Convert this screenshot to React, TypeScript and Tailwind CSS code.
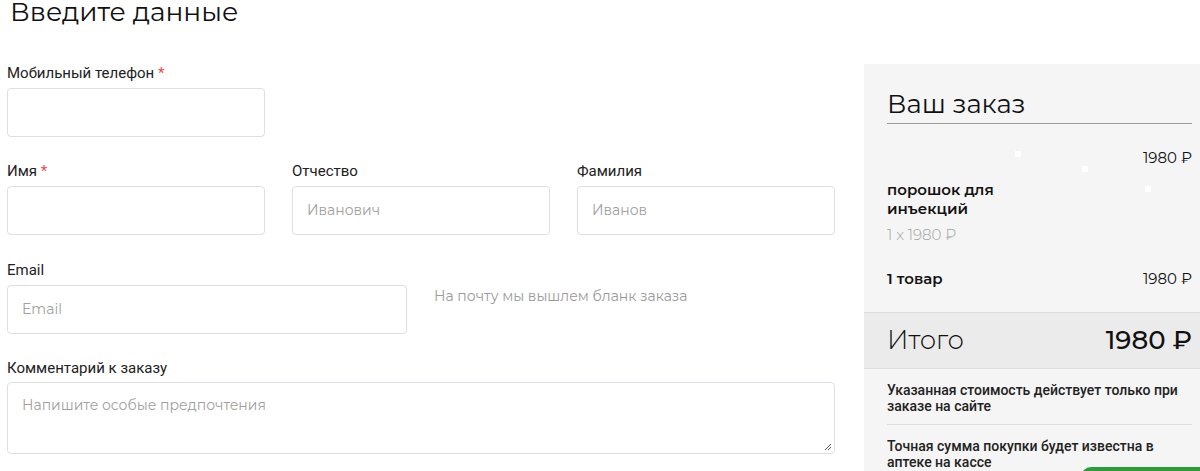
import React from "react";

const mont = "font-['Montserrat','Noto_Sans','DejaVu_Sans',sans-serif]";
const roboto = "font-['Roboto','Liberation_Sans',sans-serif]";

const Field = ({
  label,
  required,
  placeholder,
  className,
}: {
  label: string;
  required?: boolean;
  placeholder?: string;
  className?: string;
}) => (
  <div className={className}>
    <div className={`${roboto} text-[15px] leading-[18px] text-[#222]`}>
      {label}
      {required && <span className="text-[#e94b4b]"> *</span>}
    </div>
    <div className="mt-[6px] h-[49px] rounded-[4px] border border-[#dcdfe6] bg-white px-[14px] flex items-center">
      <span className={`${mont} text-[14px] text-[#a0a0a0]`}>{placeholder}</span>
    </div>
  </div>
);

const App = () => {
  return (
    <div className="flex w-[1200px] h-[471px] overflow-hidden bg-white text-[#111]">
      {/* form */}
      <div className="ml-[7px] w-[828px] shrink-0">
        <h1 className={`${mont} ml-[3px] -mt-[6px] text-[26.5px] font-normal leading-[36px]`}>
          Введите данные
        </h1>
        <Field label="Мобильный телефон" required className="mt-[34px] w-[258px]" />
        <div className="mt-[25px] grid grid-cols-3 gap-x-[27px]">
          <Field label="Имя" required />
          <Field label="Отчество" placeholder="Иванович" />
          <Field label="Фамилия" placeholder="Иванов" />
        </div>
        <div className="mt-[26px] flex items-end">
          <Field label="Email" placeholder="Email" className="w-[400px]" />
          <div className={`${mont} ml-[27px] mb-[27px] text-[14px] text-[#9a9a9a]`}>
            На почту мы вышлем бланк заказа
          </div>
        </div>
        <div className="mt-[25px]">
          <div className={`${roboto} text-[15px] leading-[18px] text-[#222]`}>Комментарий к заказу</div>
          <div className="relative mt-[5px] h-[72px] rounded-[4px] border border-[#dcdfe6] bg-white px-[14px] pt-[9px]">
            <span className={`${mont} text-[14px] text-[#a0a0a0]`}>Напишите особые предпочтения</span>
            <svg className="absolute right-[2px] bottom-[2px]" width="9" height="9" viewBox="0 0 9 9">
              <path d="M8 2 L2 8 M8 5 L5 8" stroke="#555" strokeWidth="1" />
            </svg>
          </div>
        </div>
      </div>

      {/* order summary */}
      <div className="relative ml-[29px] mt-[64px] w-[336px] shrink-0 bg-[#f5f5f5]">
        <div className="px-[23px] pr-[8px]">
          <div className={`${mont} pt-[25px] text-[26px] leading-[30px] font-normal text-[#111]`}>Ваш заказ</div>
          <div className="mt-[4px] h-px bg-[#9b9b9b]" />
          <div className="relative h-[128px]">
            <span className="absolute left-[128px] top-[27px] h-[6px] w-[6px] bg-white" />
            <span className="absolute left-[195px] top-[42px] h-[6px] w-[6px] bg-white" />
            <span className="absolute left-[258px] top-[62px] h-[6px] w-[6px] bg-white" />
            <div className={`${mont} pt-[23px] text-right text-[15px] font-normal text-[#111]`}>1980 ₽</div>
            <div className={`${mont} mt-[10px] text-[15px] font-semibold leading-[19px] text-[#111]`}>
              порошок для
              <br />
              инъекций
            </div>
            <div className={`${mont} mt-[6px] text-[15px] font-light text-[#a3a3a3]`}>1 x 1980 ₽</div>
          </div>
          <div className="flex justify-between pb-[21px] pt-[16px]">
            <span className={`${mont} text-[15px] font-semibold`}>1 товар</span>
            <span className={`${mont} text-[15px] font-normal`}>1980 ₽</span>
          </div>
        </div>
        <div className="flex h-[57px] items-center justify-between border-t border-b border-[#dedede] bg-[#ebebeb] pl-[23px] pr-[8px]">
          <span className={`${mont} text-[26px] font-light`}>Итого</span>
          <span className={`${mont} text-[26px] font-medium`}>1980 ₽</span>
        </div>
        <div className={`${roboto} px-[23px] pr-[8px] text-[14px] font-medium leading-[16px] text-[#222]`}>
          <div className="pt-[13px] pb-[10px] border-b border-[#dedede]">
            Указанная стоимость действует только при заказе на сайте
          </div>
          <div className="pt-[13px]">Точная сумма покупки будет известна в аптеке на кассе</div>
        </div>
        <div className="absolute left-[217px] top-[403px] h-[20px] w-[140px] rounded-[10px] bg-[#2f9a3a]" />
      </div>
    </div>
  );
};

export default App;
